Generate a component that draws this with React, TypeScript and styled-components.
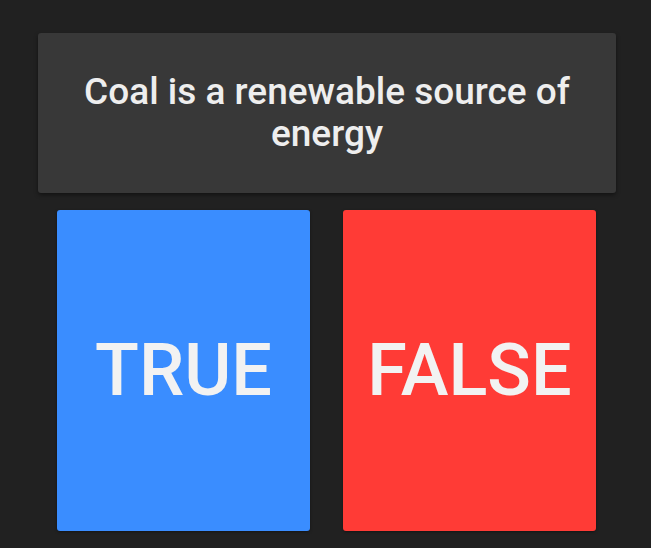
import React from "react";
import styled, { createGlobalStyle } from "styled-components";

const Global = createGlobalStyle`
  html, body { margin: 0; padding: 0; background: #212121; }
  body { font-family: Roboto, "Noto Sans", sans-serif; }
`;

const Page = styled.div`
  width: 651px;
  height: 548px;
  box-sizing: border-box;
  padding: 33px 35px 0 38px;
  display: flex;
  flex-direction: column;
  gap: 17px;
  background: #212121;
`;

const QuestionCard = styled.div`
  height: 160px;
  background: #383838;
  border-radius: 3px;
  box-shadow: 0 2px 4px rgba(0, 0, 0, 0.45);
  display: flex;
  align-items: center;
  justify-content: center;
  padding: 0 40px;
  box-sizing: border-box;
  color: #eeeeee;
  font-size: 37px;
  line-height: 42px;
  text-align: center;
  font-weight: 500;
`;

const AnswerRow = styled.div`
  display: flex;
  gap: 33px;
  padding: 0 20px 0 19px;
`;

const AnswerButton = styled.button<{ $color: string }>`
  flex: 1;
  height: 321px;
  border: none;
  border-radius: 3px;
  background: ${(p) => p.$color};
  color: #f2f2f2;
  font-family: Roboto, "Noto Sans", sans-serif;
  font-size: 72px;
  font-weight: 500;
  display: flex;
  align-items: center;
  justify-content: center;
  padding: 0;
  cursor: pointer;
  box-shadow: 0 1px 3px rgba(0, 0, 0, 0.4);
`;

export default function App() {
  return (
    <>
      <Global />
      <Page>
        <QuestionCard>Coal is a renewable source of energy</QuestionCard>
        <AnswerRow>
          <AnswerButton $color="#3a8dff">TRUE</AnswerButton>
          <AnswerButton $color="#ff3b36">FALSE</AnswerButton>
        </AnswerRow>
      </Page>
    </>
  );
}
